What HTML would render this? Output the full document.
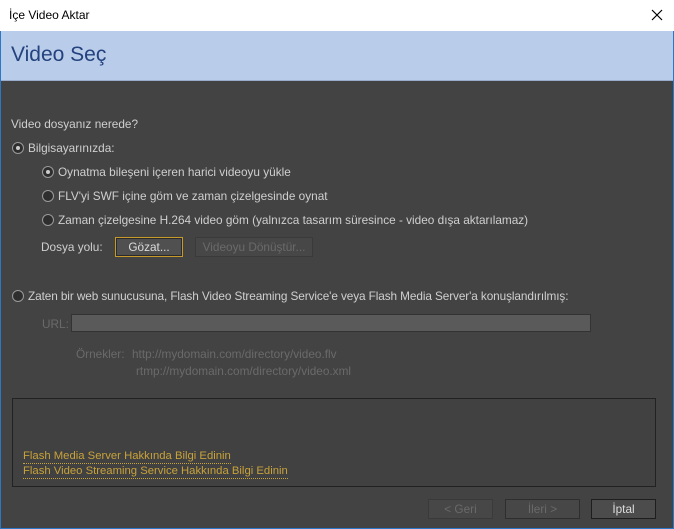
<!DOCTYPE html>
<html><head><meta charset="utf-8"><style>
*{margin:0;padding:0;box-sizing:border-box}
body{width:674px;height:529px;overflow:hidden;font-family:"Liberation Sans",sans-serif;font-size:11.8px;background:#2b78c8;position:relative}
.t{position:absolute;white-space:nowrap;color:#cfcfcf}
.title{position:absolute;left:0;top:0;width:674px;height:31px;background:#fff;color:#000}
.hdr{position:absolute;left:1px;top:31px;width:672px;height:50px;background:#b9cce9;border-bottom:1px solid #9aaccb}
.body{position:absolute;left:1px;top:81px;width:672px;height:447px;background:#434343}
.r{position:absolute;width:12px;height:12px;border-radius:50%;border:1px solid #9a9a9a;background:#2e2e2e}
.r.on::after{content:"";position:absolute;left:3px;top:3px;width:4px;height:4px;border-radius:50%;background:#ccc}
.btn{position:absolute;height:20px;border:1px solid #2a2a2a;background:#505050;color:#ddd;text-align:center;line-height:18px}
.dis{color:#6a6a6a;background:#474747;border-color:#3a3a3a}
.lk{position:absolute;color:#c8a23a;border-bottom:1px dotted #c8a23a;line-height:13px;white-space:nowrap;font-size:11.3px}
</style></head><body>
<div class="title"><span class="t" style="left:9px;top:8px;color:#000;font-size:12px">İçe Video Aktar</span>
<svg style="position:absolute;left:651px;top:9px" width="12" height="12"><path d="M1 1L11 11M11 1L1 11" stroke="#000" stroke-width="1.2"/></svg></div>
<div class="hdr"><span class="t" style="left:10px;top:12px;font-size:21px;color:#23427e">Video Seç</span></div>
<div class="body"></div>
<span class="t" style="left:11px;top:117px">Video dosyanız nerede?</span>
<div class="r on" style="left:12px;top:142px"></div><span class="t" style="left:28px;top:141px">Bilgisayarınızda:</span>
<div class="r on" style="left:42px;top:166px"></div><span class="t" style="left:58px;top:165px">Oynatma bileşeni içeren harici videoyu yükle</span>
<div class="r" style="left:42px;top:190px"></div><span class="t" style="left:58px;top:189px">FLV'yi SWF içine göm ve zaman çizelgesinde oynat</span>
<div class="r" style="left:42px;top:214px"></div><span class="t" style="left:58px;top:213px">Zaman çizelgesine H.264 video göm (yalnızca tasarım süresince - video dışa aktarılamaz)</span>
<span class="t" style="left:41px;top:240px">Dosya yolu:</span>
<div class="btn" style="left:115px;top:237px;width:68px;border-color:#c89a2a;box-shadow:inset 0 0 0 1px #2a2a2a">Gözat...</div>
<div class="btn dis" style="left:195px;top:237px;width:118px">Videoyu Dönüştür...</div>
<div class="r" style="left:12px;top:290px"></div><span class="t" style="left:28px;top:289px;letter-spacing:-0.1px">Zaten bir web sunucusuna, Flash Video Streaming Service'e veya Flash Media Server'a konuşlandırılmış:</span>
<span class="t" style="left:42px;top:317px;color:#6a6a6a">URL:</span>
<div style="position:absolute;left:71px;top:314px;width:520px;height:18px;background:#5a5a5a;border:1px solid #333"></div>
<span class="t" style="left:76px;top:347px;color:#6a6a6a">Örnekler:</span>
<span class="t" style="left:132px;top:347px;color:#6a6a6a">http://mydomain.com/directory/video.flv</span>
<span class="t" style="left:136px;top:364px;color:#6a6a6a">rtmp://mydomain.com/directory/video.xml</span>
<div style="position:absolute;left:12px;top:398px;width:644px;height:89px;border:1px solid #222;background:#414141"></div>
<span class="lk" style="left:23px;top:450px">Flash Media Server Hakkında Bilgi Edinin</span>
<span class="lk" style="left:23px;top:465px">Flash Video Streaming Service Hakkında Bilgi Edinin</span>
<div class="btn dis" style="left:428px;top:499px;width:65px">&lt; Geri</div>
<div class="btn dis" style="left:505px;top:499px;width:75px;border-color:#2e2e2e">İleri &gt;</div>
<div class="btn" style="left:591px;top:499px;width:65px;background:#4c4c4c;border-color:#1e1e1e">İptal</div>
</body></html>
